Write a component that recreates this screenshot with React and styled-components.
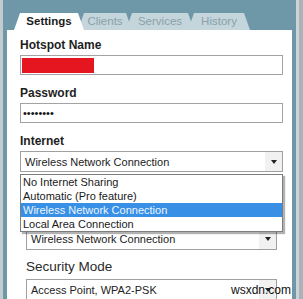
import React from "react";
import styled, { createGlobalStyle } from "styled-components";

const Global = createGlobalStyle`
  html, body { margin: 0; padding: 0; background: #fff; }
  body { font-family: "Liberation Sans", Arial, sans-serif; }
  * { box-sizing: border-box; }
`;

const Window = styled.div`
  position: relative;
  display: flex;
  width: 303px;
  height: 299px;
  overflow: hidden;
  background: #6e98a8;
`;

const EdgeLeft = styled.div`
  flex: none;
  width: 3px;
  background: #c3cbcf;
`;

const EdgeRight = styled.div`
  flex: none;
  display: flex;
  width: 7px;
  &::before { content: ""; width: 3px; background: #cdd3d6; }
  &::after { content: ""; width: 4px; background: #a9b2b6; }
`;

const Main = styled.div`
  flex: 1;
  min-width: 0;
  display: flex;
  flex-direction: column;
  padding: 0 4px;
`;

const TabBar = styled.div`
  display: flex;
  height: 30px;
  padding: 13px 0 0 7px;
  flex: none;
`;

const Tab = styled.div`
  position: relative;
  z-index: ${(p) => (p.$active ? 3 : 1)};
  width: ${(p) => p.$w}px;
  height: 17px;
  margin-left: -6px;
  &:first-child { margin-left: 0; }
  clip-path: polygon(6px 0, calc(100% - 6px) 0, 100% 100%, 0 100%);
  background: ${(p) => (p.$active ? "#ffffff" : "#c4d6dc")};
  color: ${(p) => (p.$active ? "#1c1c1c" : "#8aa0a8")};
  font-size: 11.5px;
  font-weight: ${(p) => (p.$active ? 700 : 400)};
  line-height: 17px;
  text-align: center;
`;

const Panel = styled.div`
  position: relative;
  flex: 1;
  background: #ffffff;
  padding: 8px 9px 0 13px;
`;

const Label = styled.div`
  font-size: 12px;
  font-weight: 700;
  line-height: 14px;
  color: #1e1e1e;
  margin-bottom: 3px;
`;

const Field = styled.div`
  display: flex;
  align-items: center;
  height: 20px;
  border: 1px solid #a3a3a3;
  padding: 0 1px;
  margin-bottom: 11px;
`;

const RedMark = styled.div`
  width: 72px;
  height: 15px;
  background: #e5161f;
`;

const Dots = styled.span`
  font-size: 11px;
  line-height: 14px;
  color: #111;
  padding-left: 1px;
`;

const SelectWrap = styled.div`
  position: relative;
`;

const Select = styled.div`
  display: flex;
  align-items: center;
  height: ${(p) => p.$h || 21}px;
  border: 1px solid #a0a0a0;
  padding-left: 4px;
  font-size: 11px;
  color: #222;
  background: #fff;
`;

const ArrowBox = styled.div`
  margin-left: auto;
  width: 17px;
  height: 100%;
  display: flex;
  align-items: center;
  justify-content: center;
  background: #f1f1f1;
  &::after {
    content: "";
    border-left: 3px solid transparent;
    border-right: 3px solid transparent;
    border-top: 4px solid #222;
  }
`;

const List = styled.div`
  position: absolute;
  z-index: 5;
  top: calc(100% + 2px);
  left: 0;
  right: 0;
  background: #fff;
  border: 1px solid #7d7d7d;
  box-shadow: 2px 2px 1px rgba(0, 0, 0, 0.3);
`;

const Option = styled.div`
  height: 14px;
  line-height: 14px;
  padding-left: 2px;
  font-size: 11px;
  color: ${(p) => (p.$active ? "#eef5ff" : "#1a1a1a")};
  background: ${(p) => (p.$active ? "#3790e6" : "transparent")};
`;

const Sub = styled.div`
  margin: 56px 6px 0 6px;
`;

const SubLabel = styled.div`
  font-size: 13.5px;
  line-height: 16px;
  color: #2a2a2a;
  margin: 9px 0 4px;
`;

const Watermark = styled.div`
  position: absolute;
  right: 12px;
  bottom: 2px;
  font-size: 12px;
  line-height: 14px;
  color: #111;
`;

const tabs = [
  { name: "Settings", w: 70, active: true },
  { name: "Clients", w: 54 },
  { name: "Services", w: 68 },
  { name: "History", w: 62 },
];

const options = [
  "No Internet Sharing",
  "Automatic (Pro feature)",
  "Wireless Network Connection",
  "Local Area Connection",
];

export default function App() {
  return (
    <>
      <Global />
      <Window>
        <EdgeLeft />
        <Main>
          <TabBar>
            {tabs.map((t) => (
              <Tab key={t.name} $w={t.w} $active={t.active}>
                {t.name}
              </Tab>
            ))}
          </TabBar>
          <Panel>
            <Label>Hotspot Name</Label>
            <Field>
              <RedMark />
            </Field>
            <Label>Password</Label>
            <Field>
              <Dots>••••••••</Dots>
            </Field>
            <Label>Internet</Label>
            <SelectWrap>
              <Select>
                Wireless Network Connection
                <ArrowBox />
              </Select>
              <List>
                {options.map((o, i) => (
                  <Option key={o} $active={i === 2}>
                    {o}
                  </Option>
                ))}
              </List>
            </SelectWrap>
            <Sub>
              <Select $h={22}>
                Wireless Network Connection
                <ArrowBox />
              </Select>
              <SubLabel>Security Mode</SubLabel>
              <Select $h={22}>
                Access Point, WPA2-PSK
                <ArrowBox />
              </Select>
            </Sub>
          </Panel>
        </Main>
        <EdgeRight />
        <Watermark>wsxdn.com</Watermark>
      </Window>
    </>
  );
}
